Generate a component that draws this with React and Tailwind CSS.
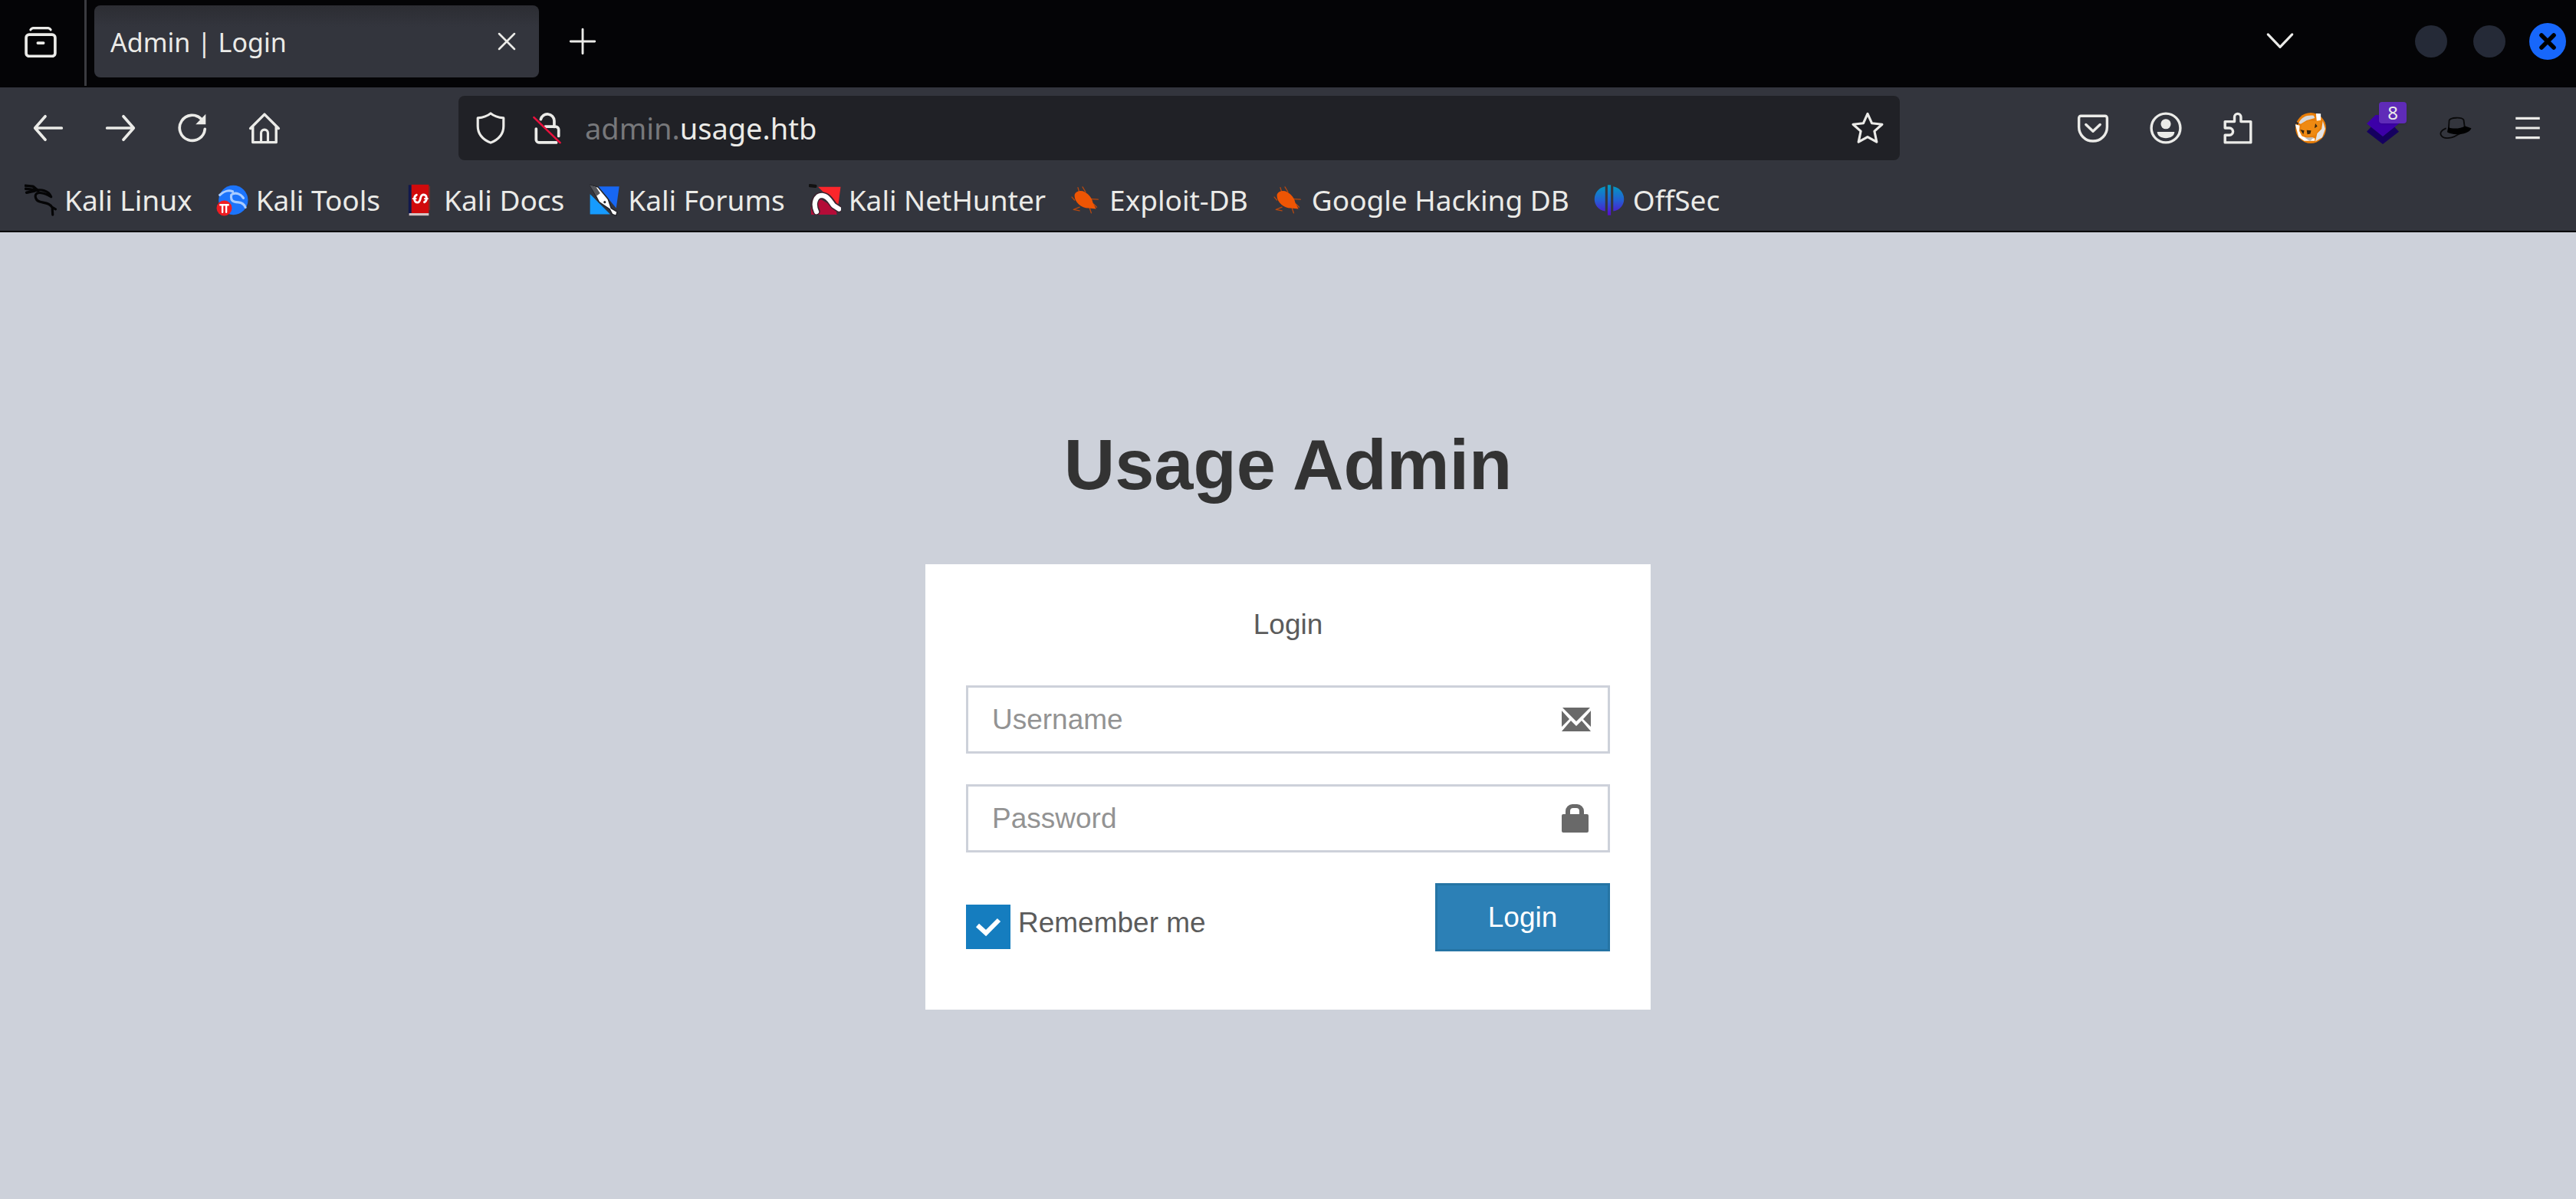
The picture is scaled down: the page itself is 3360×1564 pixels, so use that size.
import React from "react";

const UI_FONT = "font-['Noto_Sans','Open_Sans',sans-serif]";
const PAGE_FONT = "font-['Liberation_Sans',Arial,sans-serif]";

function Icon({ children, className = "size-[42px]" }) {
  return (
    <svg
      viewBox="0 0 16 16"
      className={`${className} shrink-0`}
      fill="none"
      stroke="currentColor"
      strokeWidth="1.2"
      strokeLinecap="round"
      strokeLinejoin="round"
      aria-hidden="true"
    >
      {children}
    </svg>
  );
}

function IconButton({ label, children, className = "" }) {
  return (
    <button type="button" aria-label={label} className={`flex shrink-0 items-center justify-center ${className}`}>
      <Icon>{children}</Icon>
    </button>
  );
}

function TabStrip() {
  return (
    <header className="flex h-[114px] items-center bg-[#040406] pb-1.5">
      <IconButton label="Firefox View" className="ml-8">
        <path d="M3 2.2a1.6 1.6 0 0 1 1.2-.8h7.6a1.6 1.6 0 0 1 1.2.8" />
        <rect x=".8" y="4.6" width="14.400" height="10.8" rx="1.5" strokeWidth="1.4" />
        <path d="M6.6 8.800h2.800" strokeWidth="1.4" />
      </IconButton>
      <div className="ml-9 h-28 w-[3px] self-start bg-[#3a3b40]" />
      <div className="ml-[10px] flex h-[94px] w-[580px] items-center justify-between rounded-lg bg-linear-to-b from-[#2c2d33] to-[#33353d] to-30% px-[21px]">
        <span className="pt-0.5 text-[34px] leading-none">Admin | Login</span>
        <button type="button" aria-label="Close tab" className="flex">
          <Icon>
            <path d="M4.200 4.200l7.600 7.600M11.800 4.200l-7.600 7.600" strokeWidth="1" />
          </Icon>
        </button>
      </div>
      <IconButton label="New tab" className="ml-9">
        <path d="M8 2v12M2 8h12" strokeWidth="1.1" />
      </IconButton>
      <IconButton label="List all tabs" className="ml-auto">
        <path d="M2 4.500L8 10.800l6-6.300" />
      </IconButton>
      <div className="ml-[155px] mr-[13px] flex items-center gap-[31px]">
        <button type="button" aria-label="Minimize" className="size-[42px] rounded-full bg-[#252a37]" />
        <button type="button" aria-label="Maximize" className="ml-[3px] size-[42px] rounded-full bg-[#252a37]" />
        <button type="button" aria-label="Close window" className="flex size-12 items-center justify-center rounded-full bg-[#1767fb] text-black">
          <Icon className="size-8">
            <path d="M4 4l8 8M12 4l-8 8" strokeWidth="2.800" />
          </Icon>
        </button>
      </div>
    </header>
  );
}

function NavBar() {
  return (
    <div className="flex h-[106px] items-center">
      <nav aria-label="Navigation" className="ml-[42px] flex gap-[52px]">
        <IconButton label="Back">
          <path d="M6.500 2.200L1.400 8l5.100 5.800M1.400 8h13.200" strokeWidth="1.4" />
        </IconButton>
        <IconButton label="Forward">
          <path d="M9.500 2.200L14.600 8l-5.100 5.800M14.600 8H1.400" strokeWidth="1.4" />
        </IconButton>
        <IconButton label="Reload">
          <path d="M14.200 8.500A6.300 6.300 0 1 1 12.500 3.600" strokeWidth="1.4" />
          <path d="M14.600 1v5.200H9.600z" fill="currentColor" stroke="none" />
        </IconButton>
        <IconButton label="Home">
          <path d="M1 8.200L8 1.200l7 7M2.200 7.200v7.900h11.600V7.200" strokeWidth="1.3" />
          <path d="M6.300 15v-4.500a1.700 1.700 0 0 1 3.400 0V15" />
        </IconButton>
      </nav>
      <div className="ml-[232px] flex h-[84px] flex-1 items-center rounded-lg bg-[#202126] px-[21px]">
        <IconButton label="Tracking protection">
          <path d="M8 .7c2 1.700 4 2.100 6.400 2.300v4c0 4-2.800 6.800-6.400 8.300C4.400 13.800 1.600 11 1.600 7V3C4 2.800 6 2.400 8 .7z" />
        </IconButton>
        <IconButton label="Connection is not secure" className="ml-8">
          <path d="M4.700 3.700a3.400 3.400 0 0 1 6.700.7v3M2.400 8.400v5.400a1.400 1.400 0 0 0 1.400 1.400h8.600M7 7.300h5a1.600 1.600 0 0 1 1.600 1.600v3.100" strokeWidth="1.4" />
          <path d="M1.300 2.700l13 12.600" stroke="#e8103c" strokeWidth="1" />
        </IconButton>
        <span className="ml-7 text-[38px] leading-none">
          <span className="text-[#77787b]">admin.</span>usage.htb
        </span>
        <IconButton label="Bookmark this page" className="ml-auto">
          <path d="M8 .9l2.100 4.700 5.100.6-3.800 3.400 1.100 5.300L8 12.400l-4.500 2.500 1.100-5.300L.8 6.200l5.100-.6z" />
        </IconButton>
      </div>
      <div className="ml-[231px] mr-[42px] flex w-[609px] items-center justify-between">
        <IconButton label="Save to Pocket">
          <path d="M2 2h12a1 1 0 0 1 1 1v4.500a7 7 0 0 1-14 0V3a1 1 0 0 1 1-1z" strokeWidth="1.3" />
          <path d="M4.500 6.300L8 9.600l3.500-3.300" strokeWidth="1.3" />
        </IconButton>
        <IconButton label="Account">
          <circle cx="8" cy="8" r="7.200" strokeWidth="1.3" />
          <circle cx="8" cy="6" r="2.500" fill="currentColor" stroke="none" />
          <path d="M3.700 9.900h8.600c0 2-2 3.100-4.300 3.100s-4.300-1.100-4.300-3.100z" fill="currentColor" stroke="none" />
        </IconButton>
        <IconButton label="Extensions">
          <path d="M1.600 4.800h4.700V2.500a1.600 1.600 0 0 1 3.200 0v2.300h4.900v10.400H1.600v-3.700h2.200a1.700 1.700 0 0 0 0-3.500H1.600z" strokeWidth="1.3" />
        </IconButton>
        <IconButton label="FoxyProxy">
          <g stroke="none">
            <circle cx="8" cy="8" r="7.600" fill="#e87d08" />
            <path d="M2 5.500C3.500 2.500 6 1.400 9.500 1.800L10 3 6 4.200 3 6z" fill="#d9d9d9" />
            <path d="M10.600.8L13 .9v3.200l-2 .8z" fill="#fff" />
            <path d="M.3 6.200l2.200.6-.2 2.600L3.600 12l3.400 1.200 3-.2v1.400H4.800L2 12.500z" fill="#fff" />
            <path d="M14 4.500l1.200 4-1.500 4.200-3.400 2 .9-4 2.200-2.200z" fill="#e4e4e4" />
            <path d="M3.500 6l3.300-1.700 3.400.2L13 4.200l-.5 3.800-2.300 3.600-4 .6-3.400-2z" fill="#ef8a12" />
            <path d="M2.800 8.800l2 .4-.5 1.900zM6 9l2.200.2-.4 1.700-1.500.2zM10.300 5.700l1 1.400-1.400 1z" fill="#33240f" />
            <path d="M5 12.800l4.500-.2-1.800 2z" fill="#bdbdbd" />
            <path d="M0 4.700l2 .7-.6 1.100z" fill="#26272b" />
          </g>
        </IconButton>
        <button type="button" aria-label="Wappalyzer, 8 technologies" className="relative flex">
          <Icon>
            <g stroke="none">
              <path d="M0 9.800L2.300 7.300 8 12l5.700-4.700L16 9.800l-8 6.200z" fill="#15005f" />
              <path d="M0 5.800L4.400 1.500H11.600L16 5.800 8 12.200z" fill="#3c00a8" />
            </g>
          </Icon>
          <span className="absolute -top-[13px] left-4 flex h-7 w-9 items-center justify-center rounded-sm bg-[#5f2bb8] text-[24px] leading-none shadow-sm">8</span>
        </button>
        <IconButton label="Hat extension">
          <g stroke="#0a0a0b">
            <path d="M4.500 8.700L4.800 4.200C5.400 2.700 11 2.400 12 4l.6 4.300" strokeWidth=".7" />
            <path d="M3 8.200C-1.500 10 .6 14 6 12.700c2-.5 3-1.400 4-2" strokeWidth=".7" />
            <path d="M4.300 7.600c2.300 1 6.200.7 8.400-.6l3.100 1.100c-.5 1.700-3 2.700-5.800 3s-5-.4-6.200-1.100z" fill="#000" stroke="none" />
          </g>
        </IconButton>
        <IconButton label="Open application menu">
          <path d="M2 3.200h12M2 8h12M2 12.800h12" strokeLinecap="butt" strokeWidth="1.2" />
        </IconButton>
      </div>
    </div>
  );
}

const bug = (
  <g stroke="#b8480f" strokeWidth=".5">
    <path d="M5 4.500L4.200 1.800M8 4L6.500 1.500M11 7.500l3.200.2M12 10l1.500 1.500M10 12l.8 2.400M5 11.500l-3 1.200 3 .6M2.500 8L1.200 6.500" />
    <path d="M2.600 5c1-1.600 3.200-2 5-1 2.400 1.300 3.700 3.500 4 5.200l1.600 3.200-3.600-.4C6 12.200 1.800 8.600 2.600 5z" fill="#ee5504" stroke="none" />
  </g>
);

const bookmarks = [
  {
    label: "Kali Linux",
    icon: (
      <g stroke="#050506">
        <path d="M.4.8l3.800.4 2.600 2.200M.6 2.400l3.600.4M1 4.300l4-.8" strokeWidth="1.3" />
        <path d="M5.500 3.200C8 2.600 12 3 13.200 6.400 11 4.800 7.800 4 6.200 4.600c-1.500 1-.7 3.600 1.300 4.200 2.500.7 5.300.6 6.500 3.200M13.600 11.500l1.800 1M13.800 12.300l.2 3" strokeWidth="1.2" />
      </g>
    ),
  },
  {
    label: "Kali Tools",
    icon: (
      <g stroke="none">
        <circle cx="8.500" cy="8" r="7.300" fill="#1c74fb" />
        <path d="M1.800 5.500c2-2 4.500-2.500 6.400-1.800M7.500 5.500c-.5 3 1 3.400 3.500 3.600 2 .2 3 1.200 3.500 2.500M8 5c2-.9 4.200 0 5.500 2" fill="none" stroke="#a9ccff" strokeWidth="1.2" />
        <circle cx="4" cy="12" r="3.800" fill="#ee1c22" />
        <path d="M2 10.400h4M3.100 10.400V14M5 10.400V14" stroke="#fff" strokeWidth=".9" />
      </g>
    ),
  },
  {
    label: "Kali Docs",
    icon: (
      <g stroke="none">
        <path d="M2.200.5h1.500v14.500H2.200z" fill="#11184d" />
        <path d="M3.700.3h8.600v14.200H3.700z" fill="#d10a0b" />
        <path d="M12.300 1h.6v12h-.6z" fill="#7c3028" />
        <path d="M2.500 14.500h9.800v1.200H2.500z" fill="#d8c6c6" />
        <path d="M6.200 5.400C4.600 6.200 4.800 9.200 6.700 9.200 8.700 9.200 7.500 5.400 9.600 5.300c1.900 0 2.100 2.900.5 3.700" fill="none" stroke="#fff" strokeWidth="1.1" />
        <path d="M4.400 7.300H6M10.200 7.300h1.600" stroke="#fff" strokeWidth=".7" />
      </g>
    ),
  },
  {
    label: "Kali Forums",
    icon: (
      <g stroke="none">
        <path d="M1 5l10 10H1z" fill="#169bff" />
        <path d="M5 1.200h10.500L14 12z" fill="#1767f3" />
        <path d="M1 .5l4 1 5 6 1.500 4.500 3 1.800-.5 2-2-.8-1.300-2.500L5.500 9z" fill="#fff" stroke="#25262b" strokeWidth=".6" />
        <path d="M.8.5l3.200 1L6 4.600 4.200 6z" fill="#55565b" />
        <circle cx="8.300" cy="9" r=".6" fill="#26272b" />
      </g>
    ),
  },
  {
    label: "Kali NetHunter",
    icon: (
      <g stroke="none">
        <path d="M4.600 1.400h11.200l-1.300 10z" fill="#fb262b" />
        <path d="M.6.8l2.600.3" stroke="#111" strokeWidth="1.6" />
        <path d="M1 11.500L5 7l8.500 5 .4 3.200H1.200z" fill="#b40c38" />
        <path d="M3.800 13.600C1.600 9.400 3.400 5.700 6.600 5.700c3.200.2 4.600 3.600 6 5.200l2.400 1.500" fill="none" stroke="#3b2430" strokeWidth="3.600" />
        <path d="M3.800 13.800C1.800 9.400 3.600 5.700 6.600 5.700c2.900.2 4.300 3.300 5.600 4.900l2.800 1.800" fill="none" stroke="#fff" strokeWidth="2.400" />
      </g>
    ),
  },
  { label: "Exploit-DB", icon: bug },
  { label: "Google Hacking DB", icon: bug },
  {
    label: "OffSec",
    icon: (
      <g stroke="none">
        <defs>
          <linearGradient id="offsec" x1="0" y1="0" x2="0" y2="16" gradientUnits="userSpaceOnUse">
            <stop offset="0" stopColor="#00a0be" />
            <stop offset=".5" stopColor="#2360d2" />
            <stop offset="1" stopColor="#5908cc" />
          </linearGradient>
        </defs>
        <path d="M6 1.200v12.300C-1.200 12.500-1 2.500 6 1.200zM7.200.5h1.600v15H7.200zM10 1.200c7 1.300 7.200 11.300 0 12.300z" fill="url(#offsec)" />
      </g>
    ),
  },
];

function BookmarksBar() {
  return (
    <nav aria-label="Bookmarks" className="flex h-[83px] items-center gap-[31px] border-b-2 border-black pl-8">
      {bookmarks.map(({ label, icon }) => (
        <a key={label} href="#" className="flex items-center gap-[10px] whitespace-nowrap text-[37px] leading-none">
          <Icon>{icon}</Icon>
          <span>{label}</span>
        </a>
      ))}
    </nav>
  );
}

function Field({ type, placeholder, children }) {
  return (
    <div className="flex h-[89px] items-center border-[3px] border-[#cdd1da]">
      <input
        type={type}
        aria-label={placeholder}
        placeholder={placeholder}
        className="h-full min-w-0 flex-1 bg-transparent pl-[31px] text-[37px] text-[#555] outline-none placeholder:text-[#939393]"
      />
      <svg viewBox="0 0 38 38" className="mr-[22px] size-[38px] shrink-0" fill="#696969" aria-hidden="true">
        {children}
      </svg>
    </div>
  );
}

function LoginPage() {
  return (
    <main className={`flex flex-col items-center bg-[#cdd1da] pt-[237px] ${PAGE_FONT}`}>
      <h1 className="text-[92px] font-bold leading-[132px] text-[#333]">Usage Admin</h1>
      <form className="mt-16 w-[946px] bg-white px-[53px] pb-[76px] pt-[52px] text-[37px] text-[#5b5b5b]" onSubmit={(e) => e.preventDefault()}>
        <p className="text-center leading-[53px]">Login</p>
        <div className="mt-[53px] flex flex-col gap-10">
          <Field type="text" placeholder="Username">
            <path d="M1 3h36L19 21zM0 7l10 11L0 28zM38 7v21L28 18zM12 20l7 7 7-7 12 14H0z" />
          </Field>
          <Field type="password" placeholder="Password">
            <path fillRule="evenodd" d="M5 13V9a9 9 0 0 1 9-9h6a9 9 0 0 1 9 9v4h4a2 2 0 0 1 2 2v20a2 2 0 0 1-2 2H2a2 2 0 0 1-2-2V15a2 2 0 0 1 2-2zM11 13h12V9a4 4 0 0 0-4-4h-4a4 4 0 0 0-4 4z" />
          </Field>
          <div className="flex items-start justify-between">
            <label className="mt-7 flex items-start gap-[10px]">
              <span className="grid size-[58px]">
                <input type="checkbox" defaultChecked className="col-start-1 row-start-1 size-[58px] appearance-none bg-[#157dbf]" />
                <svg viewBox="0 0 58 58" className="pointer-events-none col-start-1 row-start-1" fill="none" stroke="#fff" strokeWidth="6" aria-hidden="true">
                  <path d="M15 27l11 10 17-17" />
                </svg>
              </span>
              <span className="leading-[48px]">Remember me</span>
            </label>
            <button type="submit" className="h-[89px] w-[228px] border-[3px] border-[#2574a4] bg-[#2c80b6] text-white">
              Login
            </button>
          </div>
        </div>
      </form>
    </main>
  );
}

export default function App() {
  return (
    <div className="flex min-h-screen flex-col bg-[#cdd1da]">
      <div className={`bg-[#33353d] text-[#ebebe8] ${UI_FONT}`}>
        <TabStrip />
        <NavBar />
        <BookmarksBar />
      </div>
      <LoginPage />
    </div>
  );
}
